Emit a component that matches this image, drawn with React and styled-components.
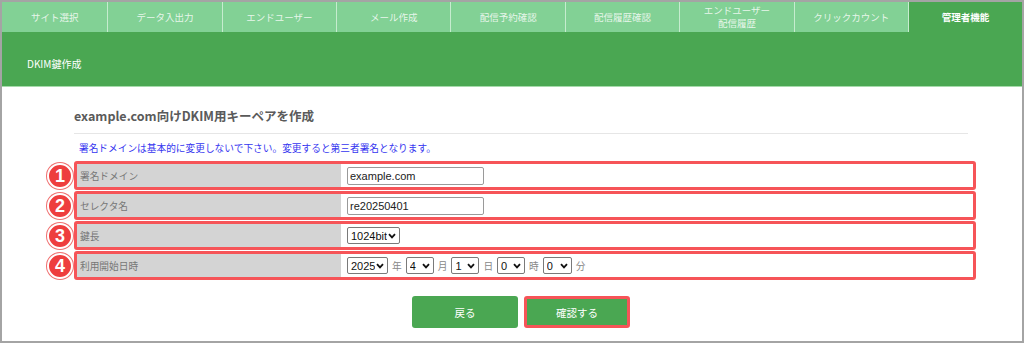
import React from "react";
import styled, { createGlobalStyle } from "styled-components";

const GlobalStyle = createGlobalStyle`
  html, body {
    margin: 0;
    padding: 0;
    background: #fff;
  }
  body {
    font-family: "Noto Sans CJK JP", "Liberation Sans", sans-serif;
  }
`;

const tabs = [
  "サイト選択",
  "データ入出力",
  "エンドユーザー",
  "メール作成",
  "配信予約確認",
  "配信履歴確認",
  "エンドユーザー\n配信履歴",
  "クリックカウント",
  "管理者機能",
];

const rows = [
  { label: "署名ドメイン", type: "input", value: "example.com" },
  { label: "セレクタ名", type: "input", value: "re20250401" },
  { label: "鍵長", type: "bits" },
  { label: "利用開始日時", type: "date" },
];

const dateParts = [
  { value: "2025", unit: "年", width: 41 },
  { value: "4", unit: "月", width: 28 },
  { value: "1", unit: "日", width: 28 },
  { value: "0", unit: "時", width: 28 },
  { value: "0", unit: "分", width: 29 },
];

function Dropdown({ width, value, options }) {
  return (
    <SelectWrap $w={width}>
      <Select defaultValue={value}>
        {options.map((o) => (
          <option key={o.value} value={o.value}>
            {o.text}
          </option>
        ))}
      </Select>
      <Chevron width="8" height="6" viewBox="0 0 8 6">
        <polyline
          points="1,1.2 4,4.4 7,1.2"
          fill="none"
          stroke="#111"
          strokeWidth="1.8"
        />
      </Chevron>
    </SelectWrap>
  );
}

function App() {
  return (
    <>
      <GlobalStyle />
      <Frame>
        <TabBar>
          {tabs.map((t, i) => (
            <Tab
              key={t}
              $first={i === 0}
              $active={i === tabs.length - 1}
            >
              {t}
            </Tab>
          ))}
        </TabBar>
        <SubHeader>DKIM鍵作成</SubHeader>
        <Content>
          <Heading>example.com向けDKIM用キーペアを作成</Heading>
          <Notice>
            署名ドメインは基本的に変更しないで下さい。変更すると第三者署名となります。
          </Notice>
          <Table>
            {rows.map((r, i) => (
              <Row key={r.label}>
                <Badge>{i + 1}</Badge>
                <Label>{r.label}</Label>
                <Value>
                  {r.type === "input" && (
                    <TextInput defaultValue={r.value} />
                  )}
                  {r.type === "bits" && (
                    <Dropdown
                      width={53}
                      value="1024"
                      options={[
                        { value: "1024", text: "1024bit" },
                        { value: "2048", text: "2048bit" },
                      ]}
                    />
                  )}
                  {r.type === "date" &&
                    dateParts.map((p) => (
                      <React.Fragment key={p.unit}>
                        <Dropdown
                          width={p.width}
                          value={p.value}
                          options={[{ value: p.value, text: p.value }]}
                        />
                        <Unit>{p.unit}</Unit>
                      </React.Fragment>
                    ))}
                </Value>
              </Row>
            ))}
          </Table>
          <Buttons>
            <Button>戻る</Button>
            <Button $marked>確認する</Button>
          </Buttons>
        </Content>
      </Frame>
    </>
  );
}

export default App;

const Frame = styled.div`
  width: 1024px;
  height: 343px;
  box-sizing: border-box;
  border: 2px solid #a4a4a4;
  overflow: hidden;
  display: flex;
  flex-direction: column;
`;

const TabBar = styled.div`
  display: flex;
  height: 30px;
  background: #82d195;
`;

const Tab = styled.div`
  flex: ${(p) => (p.$first ? "1 1 auto" : "0 0 auto")};
  width: ${(p) => (p.$first ? "auto" : p.$active ? "113px" : "114.4px")};
  box-sizing: border-box;
  display: flex;
  align-items: center;
  justify-content: center;
  text-align: center;
  white-space: pre-line;
  font-size: 9.5px;
  line-height: 13px;
  color: ${(p) => (p.$active ? "#ffffff" : "rgba(255, 255, 255, 0.82)")};
  font-weight: ${(p) => (p.$active ? 700 : 400)};
  background: ${(p) => (p.$active ? "#4aa752" : "transparent")};
  border-right: ${(p) => (p.$active ? "none" : "1px solid #c6eccf")};
`;

const SubHeader = styled.div`
  height: 55px;
  box-sizing: border-box;
  background: #4aa752;
  border-bottom: 1px solid #a6dbab;
  padding: 24px 0 0 25px;
  font-size: 10px;
  line-height: 16px;
  color: #fff;
`;

const Content = styled.div`
  padding: 0 54px 0 72px;
`;

const Heading = styled.h2`
  margin: 20px 0 0;
  padding-bottom: 8px;
  border-bottom: 1px solid #e6e6e6;
  font-size: 12.5px;
  line-height: 18px;
  font-weight: 700;
  color: #5a5a5a;
`;

const Notice = styled.p`
  margin: 7px 0 0;
  padding-left: 5px;
  font-size: 9.7px;
  line-height: 14px;
  color: #3535f0;
`;

const Table = styled.div`
  margin-top: 6px;
  width: calc(100% + 8px);
  display: flex;
  flex-direction: column;
  gap: 1px;
`;

const Row = styled.div`
  position: relative;
  height: 29px;
  box-sizing: border-box;
  border: 3px solid #f65458;
  border-radius: 3px;
  display: flex;
`;

const Badge = styled.div`
  position: absolute;
  left: -30px;
  top: -1px;
  width: 26px;
  height: 26px;
  box-sizing: border-box;
  border-radius: 50%;
  background: #ee3e3e;
  border: 2px solid #fff;
  box-shadow: 0 0 0 1px #f07070;
  display: flex;
  align-items: center;
  justify-content: center;
  font-family: "Liberation Sans", Arial, sans-serif;
  font-weight: 700;
  font-size: 18px;
  color: #fff;
`;

const Label = styled.div`
  width: 264px;
  flex-shrink: 0;
  background: #d4d4d4;
  padding-left: 3px;
  box-sizing: border-box;
  display: flex;
  align-items: center;
  font-size: 9.7px;
  color: #777;
`;

const Value = styled.div`
  flex: 1;
  display: flex;
  align-items: center;
  padding-left: 6px;
  background: #fff;
`;

const TextInput = styled.input`
  width: 137px;
  height: 18px;
  box-sizing: border-box;
  border: 1px solid #9a9a9a;
  border-radius: 2px;
  padding: 0 2px;
  font-family: "Liberation Sans", Arial, sans-serif;
  font-size: 11px;
  color: #222;
  outline: none;
`;

const SelectWrap = styled.span`
  position: relative;
  display: inline-flex;
  width: ${(p) => p.$w}px;
  height: 17px;
`;

const Select = styled.select`
  appearance: none;
  width: 100%;
  height: 100%;
  box-sizing: border-box;
  border: 1px solid #7a7a7a;
  border-radius: 2px;
  padding: 0 12px 0 3px;
  margin: 0;
  background: #fff;
  font-family: "Liberation Sans", Arial, sans-serif;
  font-size: 11px;
  color: #111;
  outline: none;
`;

const Chevron = styled.svg`
  position: absolute;
  right: 4px;
  top: 6px;
  pointer-events: none;
`;

const Unit = styled.span`
  margin: 0 4px;
  font-size: 9.7px;
  color: #888;
`;

const Buttons = styled.div`
  display: flex;
  justify-content: center;
  gap: 6px;
  margin-top: 16px;
`;

const Button = styled.button`
  width: 106px;
  height: 32px;
  box-sizing: border-box;
  border: ${(p) => (p.$marked ? "3px solid #f65458" : "none")};
  border-radius: 3px;
  background: #4aa752;
  color: #fff;
  font-family: "Noto Sans CJK JP", sans-serif;
  font-size: 10.5px;
  cursor: pointer;
`;
